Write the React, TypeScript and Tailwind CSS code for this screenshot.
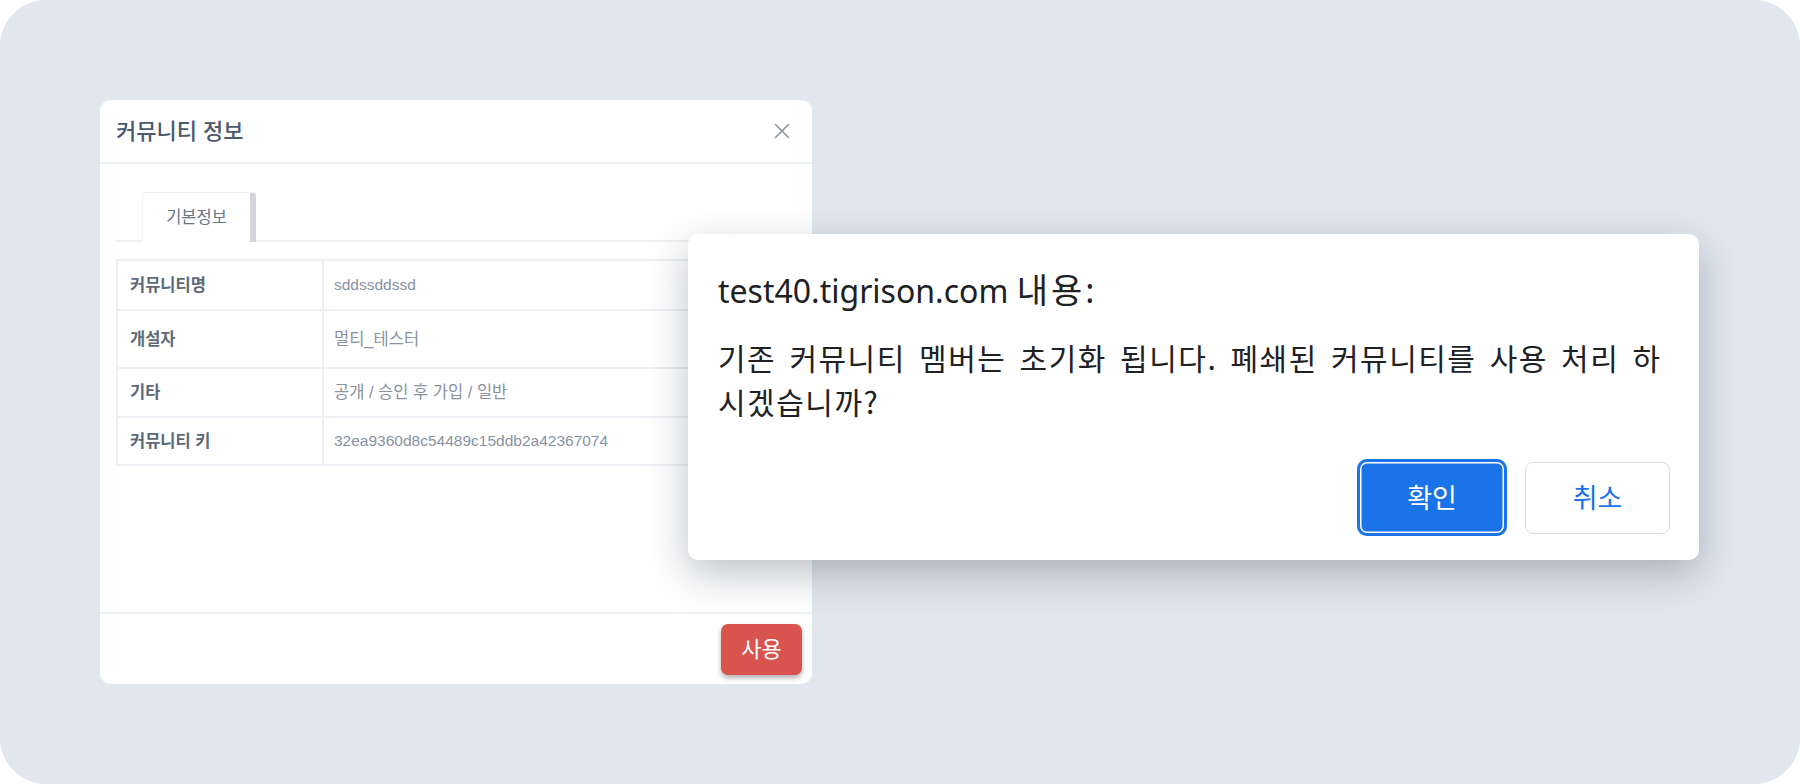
import React from "react";

const rows = [
  { label: "커뮤니티명", value: "sddssddssd", h: "h-[48px]", size: "text-[15.5px]" },
  { label: "개설자", value: "멀티_테스터", h: "h-[58px]", size: "text-[16.5px]" },
  { label: "기타", value: "공개 / 승인 후 가입 / 일반", h: "h-[49px]", size: "text-[16.5px]" },
  { label: "커뮤니티 키", value: "32ea9360d8c54489c15ddb2a42367074", h: "h-[48px]", size: "text-[15.5px]" },
];

function CommunityModal() {
  return (
    <div className="absolute left-[100px] top-[100px] flex h-[584px] w-[712px] flex-col rounded-[11px] bg-white font-['Liberation_Sans','Noto_Sans_CJK_KR',sans-serif]">
      <div className="flex h-[64px] items-center justify-between border-b-2 border-[#eef0f3] pl-4 pr-[22px]">
        <h2 className="text-[22px] font-medium text-[#4b5a6d]">커뮤니티 정보</h2>
        <button className="text-[#8994a4]">
          <svg width="16" height="16" viewBox="0 0 16 16" fill="none" stroke="currentColor" strokeWidth="1.6" strokeLinecap="round">
            <path d="M1.5 1.5l13 13M14.5 1.5l-13 13" />
          </svg>
        </button>
      </div>

      <div className="flex-1 px-4 pt-[28px]">
        <div className="flex border-b-2 border-[#eef0f3] pl-[26px]">
          <div className="-mb-[2px] flex h-[50px] w-[114px] items-stretch rounded-t-[3px] border-l border-t border-[#eef0f2] bg-white">
            <span className="flex flex-1 items-center justify-center text-[16.5px] text-[#6b7480]">기본정보</span>
            <span className="w-[6px] rounded-tr-[3px] bg-[#d3d7dd]" />
          </div>
        </div>

        <div className="mt-[17px] border-2 border-[#eceff3]">
          {rows.map((r, i) => (
            <div key={r.label} className={`flex ${r.h} ${i > 0 ? "border-t-2 border-[#eceff3]" : ""}`}>
              <div className="flex w-[206px] items-center border-r-2 border-[#eceff3] px-3 text-[16.5px] font-semibold text-[#5d6979]">
                {r.label}
              </div>
              <div className={`flex flex-1 items-center pl-[10px] ${r.size} text-[#8892a1]`}>{r.value}</div>
            </div>
          ))}
        </div>
      </div>

      <div className="flex h-[72px] items-center justify-end border-t-2 border-[#eef0f3] pr-[10px]">
        <button className="h-[51px] w-[81px] rounded-[7px] bg-[#d9534f] text-[22px] text-white shadow-[0_3px_5px_rgba(0,0,0,0.3)]">
          사용
        </button>
      </div>
    </div>
  );
}

function ConfirmDialog() {
  return (
    <div className="absolute left-[688px] top-[234px] w-[1011px] rounded-[10px] bg-white pb-[24px] pl-[30px] pr-[29px] pt-[36px] shadow-[0_14px_40px_rgba(40,50,70,0.3)]">
      <div className="whitespace-nowrap font-['Noto_Sans','Noto_Sans_CJK_KR',sans-serif] text-[32px] leading-[40px] text-[#202124]">
        test40.tigrison.com <span className="text-[34px] tracking-[3px]">내용:</span>
      </div>
      <p className="mt-[24px] font-['Noto_Sans_CJK_KR',sans-serif] text-[30px] leading-[44px] tracking-[1.5px] text-[#202124] [word-spacing:5px]">
        <span className="whitespace-nowrap">기존 커뮤니티 멤버는 초기화 됩니다. 폐쇄된 커뮤니티를 사용 처리 하</span>
        <br />
        시겠습니까?
      </p>
      <div className="mt-[36px] flex items-center justify-end gap-[18px] font-['Noto_Sans_CJK_KR',sans-serif]">
        <button className="h-[77px] w-[150px] rounded-[10px] bg-[#1a73e8] text-[27px] text-white shadow-[inset_0_0_0_3px_#1a73e8,inset_0_0_0_4.5px_#ffffff]">
          확인
        </button>
        <button className="h-[72px] w-[145px] rounded-[8px] border-[1.5px] border-[#dadce0] bg-white text-[27px] text-[#1a73e8]">
          취소
        </button>
      </div>
    </div>
  );
}

export default function App() {
  return (
    <div className="h-[784px] w-[1800px] bg-white">
      <div className="relative h-full w-full overflow-hidden rounded-[46px] bg-[#e2e7ee]">
        <CommunityModal />
        <ConfirmDialog />
      </div>
    </div>
  );
}
